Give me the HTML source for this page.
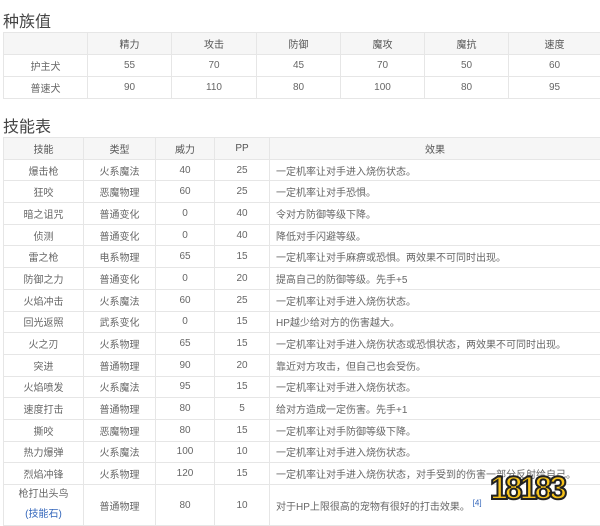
<!DOCTYPE html>
<html><head><meta charset="utf-8"><style>
body{margin:0;width:600px;height:524px;background:#fff;overflow:hidden;position:relative;font-family:"Liberation Sans","Noto Sans CJK SC",sans-serif;color:#666;}
h2{position:absolute;left:3px;margin:0;font-weight:normal;font-size:16px;color:#444;}
table{position:absolute;left:3px;border-collapse:collapse;font-size:10px;table-layout:fixed;}
td,th{border:1px solid #e6e6e6;text-align:center;padding:0;font-weight:normal;white-space:nowrap;overflow:hidden;}
th{background:#f6f6f6;color:#555;}
#t1 td,#t1 th{height:21px;}
#t2 td,#t2 th{height:20.7px;}
#t2 td.l{text-align:left;padding-left:6px;}
.logo{position:absolute;left:490px;top:470px;font:bold 32px "Liberation Sans",sans-serif;color:#f6c21a;-webkit-text-stroke:2px #222;letter-spacing:-3px;}
</style></head><body>
<h2 style="top:8px">种族值</h2>
<table id="t1" style="top:32px;width:597px">
<colgroup><col style="width:84px"><col style="width:84px"><col style="width:85px"><col style="width:84px"><col style="width:84px"><col style="width:84px"><col style="width:92px"></colgroup>
<tr><th></th><th>精力</th><th>攻击</th><th>防御</th><th>魔攻</th><th>魔抗</th><th>速度</th></tr>
<tr><td>护主犬</td><td>55</td><td>70</td><td>45</td><td>70</td><td>50</td><td>60</td></tr>
<tr><td>普速犬</td><td>90</td><td>110</td><td>80</td><td>100</td><td>80</td><td>95</td></tr>
</table>
<h2 style="top:113px">技能表</h2>
<table id="t2" style="top:137px;width:597px">
<colgroup><col style="width:80px"><col style="width:72px"><col style="width:59px"><col style="width:55px"><col style="width:331px"></colgroup>
<tr><th>技能</th><th>类型</th><th>威力</th><th>PP</th><th>效果</th></tr>
<tr><td>爆击枪</td><td>火系魔法</td><td>40</td><td>25</td><td class="l">一定机率让对手进入烧伤状态。</td></tr>
<tr><td>狂咬</td><td>恶魔物理</td><td>60</td><td>25</td><td class="l">一定机率让对手恐惧。</td></tr>
<tr><td>暗之诅咒</td><td>普通变化</td><td>0</td><td>40</td><td class="l">令对方防御等级下降。</td></tr>
<tr><td>侦测</td><td>普通变化</td><td>0</td><td>40</td><td class="l">降低对手闪避等级。</td></tr>
<tr><td>雷之枪</td><td>电系物理</td><td>65</td><td>15</td><td class="l">一定机率让对手麻痹或恐惧。两效果不可同时出现。</td></tr>
<tr><td>防御之力</td><td>普通变化</td><td>0</td><td>20</td><td class="l">提高自己的防御等级。先手+5</td></tr>
<tr><td>火焰冲击</td><td>火系魔法</td><td>60</td><td>25</td><td class="l">一定机率让对手进入烧伤状态。</td></tr>
<tr><td>回光返照</td><td>武系变化</td><td>0</td><td>15</td><td class="l">HP越少给对方的伤害越大。</td></tr>
<tr><td>火之刃</td><td>火系物理</td><td>65</td><td>15</td><td class="l">一定机率让对手进入烧伤状态或恐惧状态，两效果不可同时出现。</td></tr>
<tr><td>突进</td><td>普通物理</td><td>90</td><td>20</td><td class="l">靠近对方攻击，但自己也会受伤。</td></tr>
<tr><td>火焰喷发</td><td>火系魔法</td><td>95</td><td>15</td><td class="l">一定机率让对手进入烧伤状态。</td></tr>
<tr><td>速度打击</td><td>普通物理</td><td>80</td><td>5</td><td class="l">给对方造成一定伤害。先手+1</td></tr>
<tr><td>撕咬</td><td>恶魔物理</td><td>80</td><td>15</td><td class="l">一定机率让对手防御等级下降。</td></tr>
<tr><td>热力爆弹</td><td>火系魔法</td><td>100</td><td>10</td><td class="l">一定机率让对手进入烧伤状态。</td></tr>
<tr><td>烈焰冲锋</td><td>火系物理</td><td>120</td><td>15</td><td class="l">一定机率让对手进入烧伤状态，对手受到的伤害一部分反射给自己。</td></tr>
<tr><td style="height:37px;line-height:20px">枪打出头鸟<br><span style="color:#3366bb">(技能石)</span></td><td>普通物理</td><td>80</td><td>10</td><td class="l">对于HP上限很高的宠物有很好的打击效果。 <sup style="color:#3366bb;font-size:8px">[4]</sup></td></tr>
</table>
<div class="logo">18183</div>
</body></html>
